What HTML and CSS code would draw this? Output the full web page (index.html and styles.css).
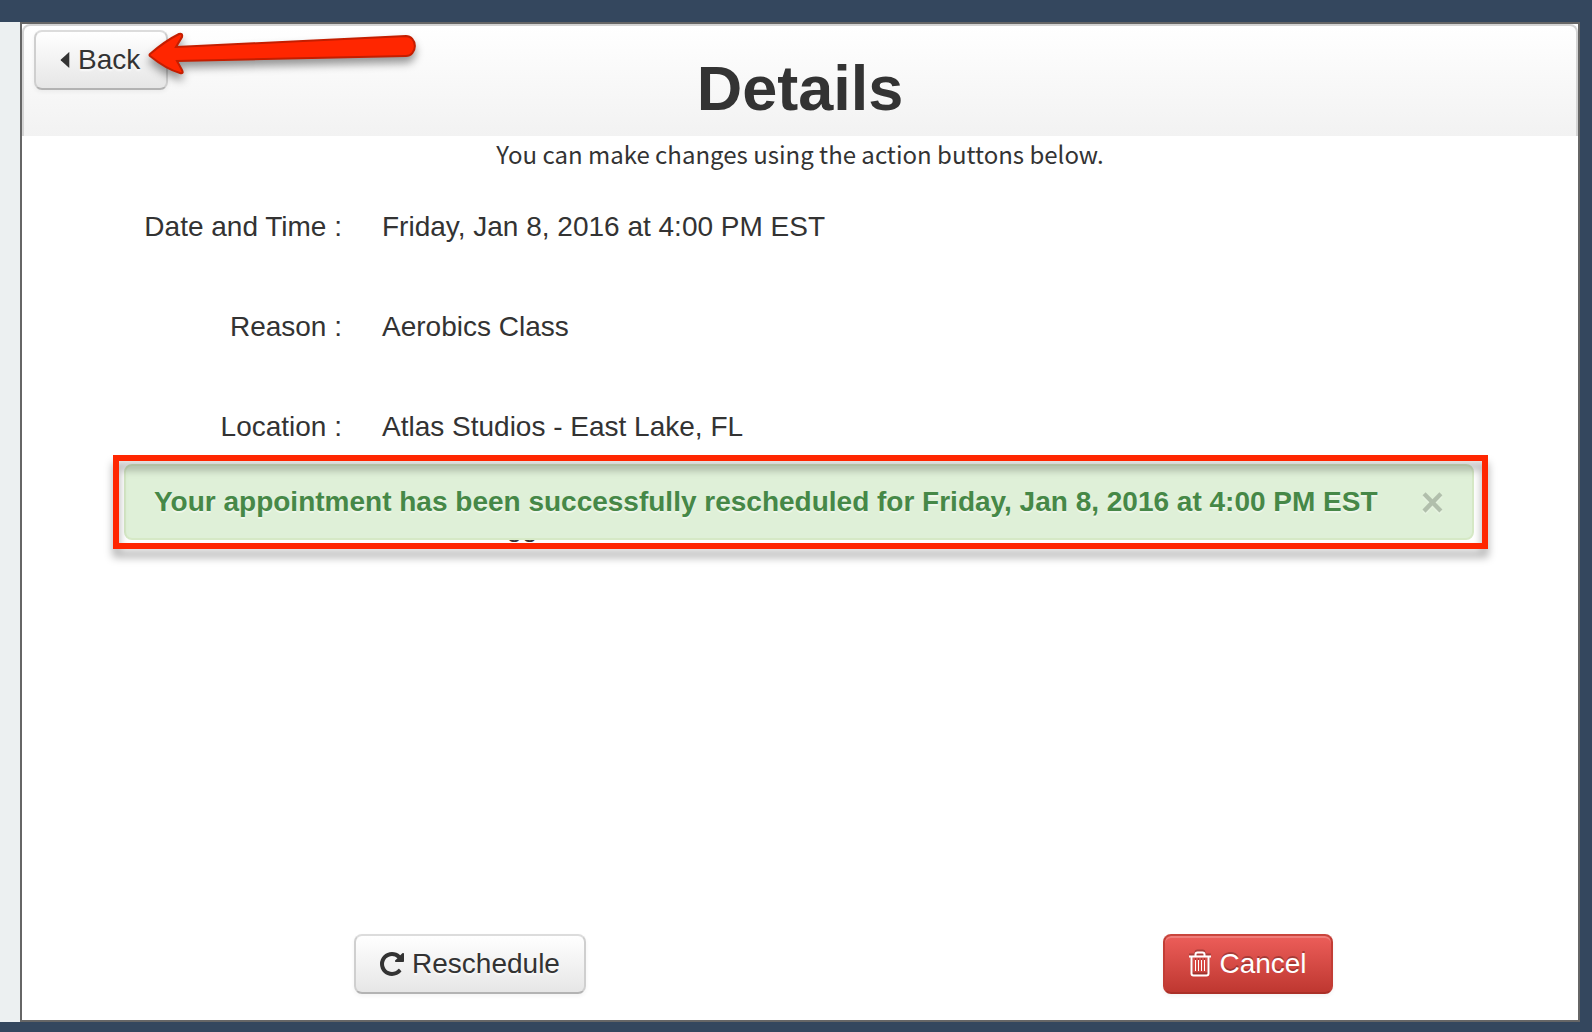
FILE: index.html
```html
<!DOCTYPE html>
<html lang="en">
<head>
    <meta charset="utf-8">
    <title>Details</title>
    <link rel="stylesheet" href="styles.css">
</head>
<body>
<div class="page">
    <div class="panel">
        <header class="header">
            <button type="button" class="btn btn-back">
                <svg class="icon-caret" viewBox="0 0 10 16"><path d="M9.300 .6v14.800q0 .6-.6.2L.9 8.500q-.5-.5 0-1L8.700 .4q.6-.4.6.2z"/></svg>
                Back
            </button>
            <h1>Details</h1>
        </header>

        <p class="intro">You can make changes using the action buttons below.</p>

        <dl class="details">
            <dt>Date and Time :</dt>
            <dd>Friday, Jan 8, 2016 at 4:00 PM EST</dd>
            <dt>Reason :</dt>
            <dd>Aerobics Class</dd>
            <dt>Location :</dt>
            <dd>Atlas Studios - East Lake, FL</dd>
            <dt></dt>
            <dd>Monica Diggs</dd>
        </dl>

        <div class="actions">
            <div class="action">
                <button type="button" class="btn">
                    <svg class="icon-repeat" viewBox="0 0 1536 1536"><path transform="translate(0 1408) scale(1 -1)" d="M1536 1280v-448q0-26-19-45t-45-19h-448q-42 0-59 40-17 39 14 69l138 138q-148 137-349 137-104 0-198.500-40.500t-163.500-109.500-109.500-163.500-40.500-198.500 40.500-198.500 109.500-163.500 163.500-109.500 198.500-40.500q119 0 225 52t179 147q7 10 23 12 15 0 25-9l137-138q9-8 9.500-20.500t-7.500-22.500q-109-132-264-204.500t-327-72.500q-156 0-298 61t-245 164-164 245-61 298 61 298 164 245 245 164 298 61q147 0 284.500-55.500t244.500-156.500l130 129q29 31 70 14 39-17 39-59z"/></svg>
                    Reschedule
                </button>
            </div>
            <div class="action">
                <button type="button" class="btn btn-danger">
                    <svg class="icon-trash" viewBox="0 0 22 26">
                        <path d="M0 5.500h22M6.500 5.500V3.500q0-2 2-2h5q2 0 2 2v2M2.500 5.500v17q0 2 2 2h13q2 0 2-2v-17"/>
                        <path class="slats" d="M6.500 9v11M9.500 9v11M12.500 9v11M15.500 9v11"/>
                    </svg>
                    Cancel
                </button>
            </div>
        </div>

        <div class="alert" role="alert">
            <strong>Your appointment has been successfully rescheduled for Friday, Jan 8, 2016 at 4:00 PM EST</strong>
            <button type="button" class="close" aria-label="Close">&times;</button>
        </div>

        <!-- callouts -->
        <div class="callout-box"></div>
        <svg class="callout-arrow" viewBox="0 0 272 44">
            <path d="M2 21Q1 22 2 23Q18 36 32 40Q36 41 34 37L29 28L258 23A8 9 0 0 0 258 3L28 14L34 4Q35 0 31 1Q17 8 2 21z"/>
        </svg>
    </div>
</div>
</body>
</html>
```
FILE: styles.css
```css
* {
    box-sizing: border-box;
}

body {
    margin: 0;
    min-height: 100vh;
    padding: 22px 12px 10px 0;
    display: flex;
    background: #34475e;
    color: #333;
    font-family: "Liberation Sans", Arial, sans-serif;
    font-size: 28px;
    line-height: 40px;
}

.page {
    flex: 1;
    display: flex;
    padding-left: 20px;
    background: #ecf0f1;
}

.panel {
    position: relative;
    flex: 1;
    display: flex;
    flex-direction: column;
    border: 2px solid #666;
    background: #fff;
}

.header {
    display: grid;
    grid-template-columns: 1fr auto 1fr;
    align-items: start;
    padding: 4px 10px 8px;
    border: 2px solid #d4d4d4;
    border-bottom: 0;
    border-radius: 8px 8px 0 0;
    background: linear-gradient(#fff, #f2f2f2);
}

.header .btn {
    justify-self: start;
}

h1 {
    margin: 18px 0 0;
    font-size: 63px;
    line-height: 80px;
}

.intro {
    margin: 0;
    text-align: center;
    font-family: "Noto Sans CJK SC", "Noto Sans", sans-serif;
    font-size: 24px;
    line-height: 36px;
}

.details {
    display: grid;
    grid-template-columns: 320px 1fr;
    gap: 60px 40px;
    margin: 35px 0 30px;
}

.details dt {
    text-align: right;
}

.details dd {
    margin: 0;
}

.btn {
    display: flex;
    align-items: center;
    gap: 8px;
    padding: 8px 24px;
    border: 2px solid #d4d4d4;
    border-color: #dcdcdc #cfcfcf #b3b3b3;
    border-radius: 8px;
    background: linear-gradient(#fff, #e6e6e6);
    box-shadow: 0 2px 4px rgba(0,0,0,.05);
    color: #333;
    font: inherit;
    text-shadow: 0 2px 2px rgba(255,255,255,.75);
}

.btn-back {
    min-width: 134px;
}

.btn-danger {
    border-color: #c9453d #c23d35 #ab3028;
    background: linear-gradient(#ee5f5b, #bd362f) border-box;
    box-shadow: inset 0 2px 0 rgba(255,255,255,.2), 0 2px 4px rgba(0,0,0,.05);
    color: #fff;
    text-shadow: 0 -2px 0 rgba(0,0,0,.25);
}

.icon-caret {
    width: 10px;
    height: 16px;
    fill: #333;
}

.icon-repeat {
    width: 24px;
    height: 24px;
    fill: #333;
}

.icon-trash {
    width: 22px;
    height: 26px;
    fill: none;
    stroke: #fff;
    stroke-width: 2;
    filter: drop-shadow(0 -2px 0 rgba(0,0,0,.25));
}

.icon-trash .slats {
    stroke-width: 1;
}

.actions {
    display: flex;
    margin-top: auto;
    padding-bottom: 26px;
}

.action {
    flex: 1;
    display: flex;
    justify-content: center;
    padding-left: 118px;
}

/* sits over the details list */
.alert {
    position: absolute;
    top: 440px;
    left: 102px;
    right: 104px;
    display: flex;
    align-items: center;
    justify-content: space-between;
    padding: 16px 28px;
    border: 2px solid #d6e9c6;
    border-radius: 8px;
    background: #dff0d8;
    color: #468847;
    text-shadow: 0 2px 0 rgba(255,255,255,.5);
}

.close {
    padding: 0;
    border: 0;
    background: none;
    color: #000;
    font: bold 40px/40px "Liberation Sans", Arial, sans-serif;
    text-shadow: 0 2px 0 #fff;
    opacity: .2;
}

.callout-box {
    position: absolute;
    top: 431px;
    left: 91px;
    right: 90px;
    height: 94px;
    border: 6px solid #ff2600;
    filter: drop-shadow(0 8px 4px rgba(0,0,0,.35));
    pointer-events: none;
}

.callout-arrow {
    position: absolute;
    top: 9px;
    left: 126px;
    width: 272px;
    height: 44px;
    overflow: visible;
    fill: #ff2600;
    stroke: #c41e00;
    stroke-width: 2;
    filter: drop-shadow(0 6px 4px rgba(0,0,0,.4));
    pointer-events: none;
}
```
